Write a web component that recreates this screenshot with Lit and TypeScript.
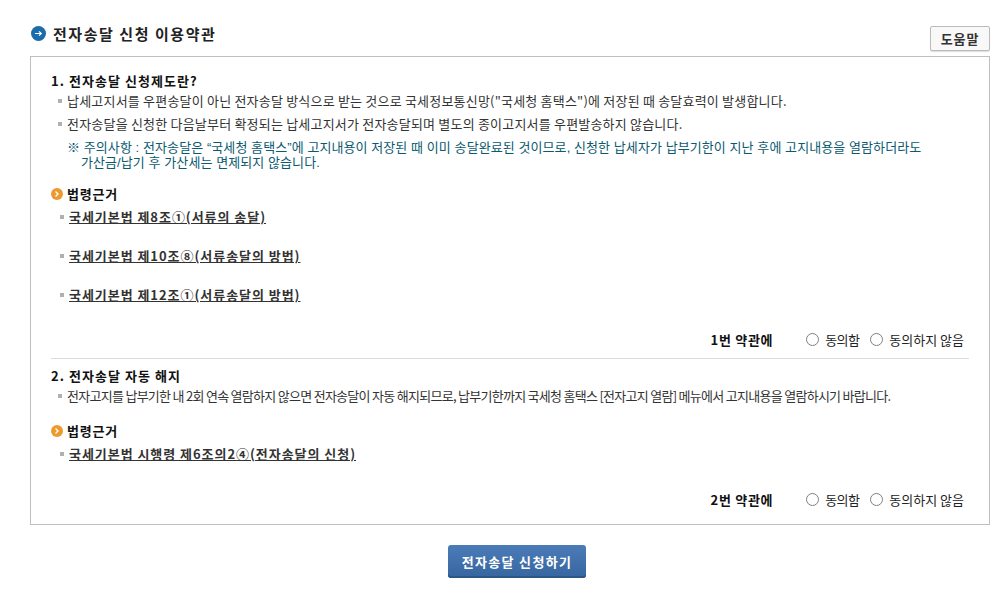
import { LitElement, html, css } from "lit";
import { customElement } from "lit/decorators.js";

@customElement("app-root")
export class AppRoot extends LitElement {
  static styles = css`
    :host { display: block; width: 993px; height: 600px; overflow: hidden; background: #fff; font-family: "Noto Sans CJK KR", "Noto Sans", sans-serif; font-size: 13px; color: #333; }
    .page { padding: 0 3px 0 30px; }
    .head { display: flex; justify-content: space-between; height: 56px; }
    .title { display: flex; align-items: center; gap: 7px; height: 18px; margin-top: 24px; font-size: 15px; font-weight: 700; color: #222; letter-spacing: 1.55px; }
    .title svg { margin-left: 1px; }
    .help { box-sizing: border-box; width: 60px; height: 25px; margin-top: 26px; border: 1px solid #bbb; border-radius: 2px; background: #f8f8f8; font: 700 13px "Noto Sans CJK KR", sans-serif; color: #333; letter-spacing: 0.9px; padding: 0; box-shadow: 0 1px 1px #ddd; }
    .box { box-sizing: border-box; height: 469px; border: 1px solid #bfbfbf; padding: 16px 20px 0 20px; }
    h2 { margin: 0; font-size: 13px; line-height: 16px; font-weight: 700; color: #111; letter-spacing: 1.05px; }
    h2.second { margin-top: 9px; }
    ul { list-style: none; margin: 0; padding: 0; }
    .desc { margin-top: 0; }
    .desc li { display: flex; align-items: center; height: 23px; padding-left: 7px; gap: 5px; letter-spacing: 0.2px; color: #333; white-space: nowrap; }
    .desc li.tight { letter-spacing: -0.72px; }
    .sq { flex: none; width: 4px; height: 4px; background: #b0b0b0; }
    .note { margin: 5px 0 0 16px; font-family: "Liberation Sans", "Noto Sans CJK KR", sans-serif; color: #0b5a70; line-height: 15px; letter-spacing: 0.08px; white-space: nowrap; }
    .note .ind { padding-left: 14px; display: block; }
    .law { display: flex; align-items: center; gap: 4px; margin-top: 16px; font-weight: 700; color: #111; font-size: 13px; line-height: 16px; letter-spacing: 0.75px; }
    .links { margin-top: -5px; }
    .links li { display: flex; align-items: center; height: 39px; padding-left: 9px; gap: 5px; }
    .links a { font-weight: 700; color: #333; text-decoration: underline; letter-spacing: 0.95px; white-space: nowrap; }
    .agree { display: flex; justify-content: flex-end; align-items: center; height: 18px; padding-right: 5px; }
    .agree.first { margin-top: 16px; }
    .agree.last { margin-top: 17px; }
    .agree b { color: #111; margin-right: 33px; letter-spacing: 0.7px; }
    .agree label { display: flex; align-items: center; gap: 6px; color: #222; letter-spacing: 0; }
    .agree label.tight { letter-spacing: -0.6px; }
    .agree label + label { margin-left: 11px; }
    .radio { box-sizing: border-box; width: 13px; height: 13px; border: 1px solid #808080; border-radius: 50%; background: #fff; }
    hr { border: 0; border-top: 1px solid #ddd; margin: 10px 0 0; }
    .foot { display: flex; justify-content: center; padding: 20px 0 0 14px; }
    .go { box-sizing: border-box; width: 138px; height: 33px; border: 0; border-radius: 3px; padding: 0; font: 700 13px "Noto Sans CJK KR", sans-serif; letter-spacing: 1.3px; color: #fff; background: linear-gradient(#4c7cb8, #36659f); box-shadow: inset 0 -2px 0 #2c5688; }
  `;

  agree(n: number) {
    return html`<b>${n}번 약관에</b>
      <label class="tight"><span class="radio"></span>동의함</label>
      <label><span class="radio"></span>동의하지 않음</label>`;
  }

  lawHead() {
    return html`<div class="law">
      <svg width="12" height="12" viewBox="0 0 12 12"><circle cx="6" cy="6" r="6" fill="#ec9a2e"/><path d="M4.500 3.500L7 6L4.500 8.500" fill="none" stroke="#fff" stroke-width="1.3"/></svg>법령근거
    </div>`;
  }

  render() {
    return html`<div class="page">
      <div class="head">
        <div class="title">
          <svg width="15" height="15" viewBox="0 0 15 15"><circle cx="7.500" cy="7.500" r="7.500" fill="#1b6cab"/><path d="M4 7.500h6M8 5.400l2.300 2.100L8 9.600" fill="none" stroke="#fff" stroke-width="1.2"/></svg>
          전자송달 신청 이용약관
        </div>
        <button class="help">도움말</button>
      </div>
      <div class="box">
        <h2>1. 전자송달 신청제도란?</h2>
        <ul class="desc">
          <li><span class="sq"></span>납세고지서를 우편송달이 아닌 전자송달 방식으로 받는 것으로 국세정보통신망("국세청 홈택스")에 저장된 때 송달효력이 발생합니다.</li>
          <li><span class="sq"></span>전자송달을 신청한 다음날부터 확정되는 납세고지서가 전자송달되며 별도의 종이고지서를 우편발송하지 않습니다.</li>
        </ul>
        <div class="note">※ 주의사항 : 전자송달은 “국세청 홈택스”에 고지내용이 저장된 때 이미 송달완료된 것이므로, 신청한 납세자가 납부기한이 지난 후에 고지내용을 열람하더라도<span class="ind">가산금/납기 후 가산세는 면제되지 않습니다.</span></div>
        ${this.lawHead()}
        <ul class="links">
          <li><span class="sq"></span><a>국세기본법 제8조①(서류의 송달)</a></li>
          <li><span class="sq"></span><a>국세기본법 제10조⑧(서류송달의 방법)</a></li>
          <li><span class="sq"></span><a>국세기본법 제12조①(서류송달의 방법)</a></li>
        </ul>
        <div class="agree first">${this.agree(1)}</div>
        <hr />
        <h2 class="second">2. 전자송달 자동 해지</h2>
        <ul class="desc">
          <li class="tight"><span class="sq"></span>전자고지를 납부기한 내 2회 연속 열람하지 않으면 전자송달이 자동 해지되므로, 납부기한까지 국세청 홈택스 [전자고지 열람] 메뉴에서 고지내용을 열람하시기 바랍니다.</li>
        </ul>
        ${this.lawHead()}
        <ul class="links">
          <li><span class="sq"></span><a>국세기본법 시행령 제6조의2④(전자송달의 신청)</a></li>
        </ul>
        <div class="agree last">${this.agree(2)}</div>
      </div>
      <div class="foot"><button class="go">전자송달 신청하기</button></div>
    </div>`;
  }
}
